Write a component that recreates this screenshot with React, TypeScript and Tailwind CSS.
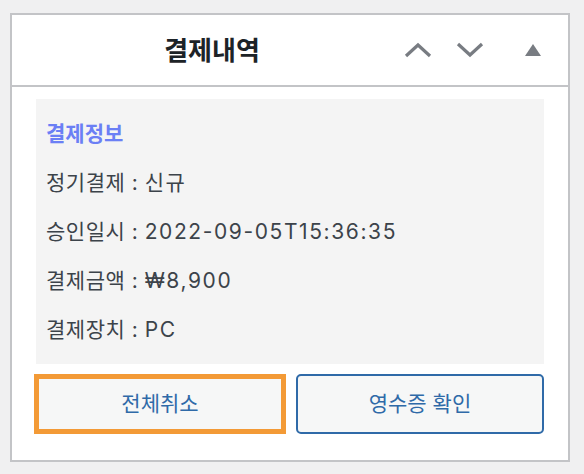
import React from "react";

const rows = [
  { label: "정기결제", value: "신규" },
  { label: "승인일시", value: "2022-09-05T15:36:35" },
  { label: "결제금액", value: "₩8,900" },
  { label: "결제장치", value: "PC" },
];

function ChevronUp() {
  return (
    <svg width="28" height="16" viewBox="0 0 28 16" fill="none">
      <path d="M2 14 L14 3 L26 14" stroke="#787c82" strokeWidth="3.2" />
    </svg>
  );
}

function ChevronDown() {
  return (
    <svg width="28" height="16" viewBox="0 0 28 16" fill="none">
      <path d="M2 2 L14 13 L26 2" stroke="#787c82" strokeWidth="3.2" />
    </svg>
  );
}

function Triangle() {
  return (
    <svg width="16" height="12" viewBox="0 0 16 12">
      <path d="M8 0 L16 12 L0 12 Z" fill="#787c82" />
    </svg>
  );
}

export default function App() {
  return (
    <div
      className="min-h-[474px] w-[584px] bg-[#f0f0f1] pt-[13px] pl-[10px]"
      style={{ fontFamily: 'Inter, "Noto Sans CJK KR", sans-serif' }}
    >
      <div className="w-[560px] h-[449px] border-2 border-[#c3c4c7] bg-white">
        <div className="flex items-center h-[72px] pr-[17px] border-b-2 border-[#c3c4c7]">
          <h2 className="flex-1 pl-[12px] text-center text-[26px] font-bold text-[#1d2327]">
            결제내역
          </h2>
          <button className="flex h-[36px] w-[36px] items-center justify-center">
            <ChevronUp />
          </button>
          <button className="ml-[16px] flex h-[36px] w-[36px] items-center justify-center">
            <ChevronDown />
          </button>
          <button className="ml-[27px] flex h-[36px] w-[36px] items-center justify-center">
            <Triangle />
          </button>
        </div>
        <div className="px-[24px] pt-[12px]">
          <div className="bg-[#f4f4f4] pl-[10px] pt-[10px] pb-[10px] text-[21px] leading-[49px] tracking-[0.5px] text-[#3c434a]">
            <div className="text-[21px] font-bold tracking-normal text-[#6b7ff5]">결제정보</div>
            {rows.map((row) => (
              <div key={row.label}>
                {row.label} : <span className="tracking-[1.6px]">{row.value}</span>
              </div>
            ))}
          </div>
          <div className="mt-[10px] flex gap-[10px]">
            <button className="-ml-[2px] h-[60px] w-[252px] border-[5px] border-[#f39a36] bg-[#f6f7f7] text-[21px] text-[#2f6aa8]">
              전체취소
            </button>
            <button className="h-[60px] flex-1 rounded-[5px] border-2 border-[#2f6aa8] bg-[#f6f7f7] text-[21px] text-[#2f6aa8]">
              영수증 확인
            </button>
          </div>
        </div>
      </div>
    </div>
  );
}
